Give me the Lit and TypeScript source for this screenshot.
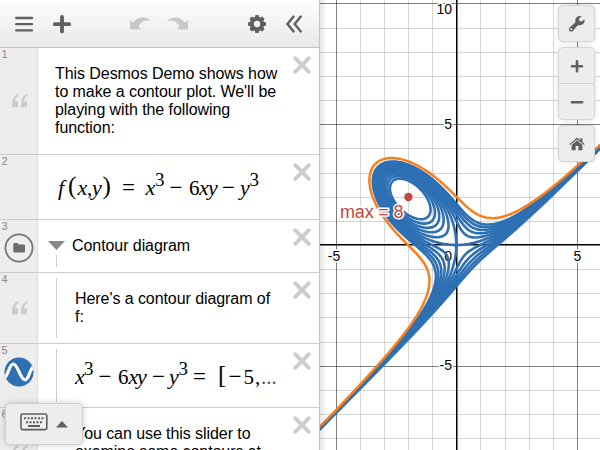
import { LitElement, html, svg, css } from "lit";
import { customElement } from "lit/decorators.js";

/* ---------- graph geometry ---------- */
const WIDTH = 280;
const HEIGHT = 450;
const UNIT = 24.15;
const OX = 136.3;
const OY = 244.97;
const LEVELS = Array.from({ length: 11 }, (_, i) => i - 5);

const f = (x: number, y: number) => x ** 3 - 6 * x * y - y ** 3;
const snap = (v: number) => Math.round(v) + 0.5;

/* Marching squares over the visible plane. */
function contour(level: number): string {
  const step = 2;
  const nx = WIDTH / step + 2;
  const ny = HEIGHT / step + 2;
  const at = (i: number, j: number) =>
    f(((i - 1) * step + 0.63 - OX) / UNIT, (OY - ((j - 1) * step + 0.37)) / UNIT) - level;
  const px = (i: number) => (i - 1) * step + 0.63;
  const py = (j: number) => (j - 1) * step + 0.37;
  let d = "";
  let row = Array.from({ length: nx + 1 }, (_, i) => at(i, 0));
  for (let j = 0; j < ny; j++) {
    const next = Array.from({ length: nx + 1 }, (_, i) => at(i, j + 1));
    for (let i = 0; i < nx; i++) {
      const a = row[i], b = row[i + 1], c = next[i + 1], e = next[i];
      const pts: string[] = [];
      const add = (x: number, y: number) => pts.push(`${x.toFixed(2)} ${y.toFixed(2)}`);
      if (a > 0 !== b > 0) add(px(i) + (step * a) / (a - b), py(j));
      if (b > 0 !== c > 0) add(px(i + 1), py(j) + (step * b) / (b - c));
      if (e > 0 !== c > 0) add(px(i) + (step * e) / (e - c), py(j + 1));
      if (a > 0 !== e > 0) add(px(i), py(j) + (step * a) / (a - e));
      for (let k = 0; k + 1 < pts.length; k += 2) d += `M${pts[k]}L${pts[k + 1]}`;
    }
    row = next;
  }
  return d;
}

@customElement("contour-graph")
export class ContourGraph extends LitElement {
  static styles = css`
    :host { display: block; width: 280px; height: 450px; background: #fff; }
    svg { display: block; }
    .minor { stroke: #000; stroke-opacity: 0.16; stroke-width: 1; }
    .major { stroke: #000; stroke-opacity: 0.5; stroke-width: 1; }
    .axis { stroke: #000; stroke-width: 1.5; }
    .curve { fill: none; stroke: #2d70b3; stroke-width: 2.6; stroke-linecap: round; }
    .slider { stroke: #fa7e19; stroke-width: 2.5; }
    .label { font: 14px "Liberation Sans", Arial, sans-serif; text-anchor: end; fill: #000;
      stroke: #fff; stroke-width: 3px; stroke-linejoin: round; paint-order: stroke; }
    .mid { text-anchor: middle; }
    .max { font: 18px "Liberation Sans", Arial, sans-serif; fill: #c74440;
      stroke: #fff; stroke-width: 3px; stroke-linejoin: round; paint-order: stroke; }
    .dot { fill: #c74440; }
  `;
  render() {
    const xs = Array.from({ length: 12 }, (_, i) => i - 6).filter((n) => n !== 0);
    const ys = Array.from({ length: 20 }, (_, i) => i - 9).filter((n) => n !== 0);
    return html`<svg width="280" height="450" viewBox="0 0 280 450">
      <defs>
        <linearGradient id="edge"><stop offset="0" stop-opacity=".1" /><stop offset="1" stop-opacity="0" /></linearGradient>
      </defs>
      ${xs.map((n) => svg`<line class=${n % 5 ? "minor" : "major"} x1=${snap(OX + n * UNIT)} x2=${snap(OX + n * UNIT)} y1="0" y2="450"></line>`)}
      ${ys.map((n) => svg`<line class=${n % 5 ? "minor" : "major"} y1=${snap(OY - n * UNIT)} y2=${snap(OY - n * UNIT)} x1="0" x2="280"></line>`)}
      <line class="axis" x1="136.75" x2="136.75" y1="0" y2="450" />
      <line class="axis" x1="0" x2="280" y1="244.75" y2="244.75" />
      <text class="label" x="132" y="14">10</text>
      <text class="label" x="132" y="129">5</text>
      <text class="label" x="132" y="370">-5</text>
      <text class="label" x="132" y="261">0</text>
      <text class="label mid" x="14" y="261">-5</text>
      <text class="label mid" x="257.5" y="261">5</text>
      ${LEVELS.map((k) => svg`<path class="curve" d=${contour(k)}></path>`)}
      <path class="curve slider" d=${contour(-8)} />
      <circle class="dot" cx="88.4" cy="197" r="4.2" />
      <text class="max" x="20" y="218" textLength="63.5">max = 8</text>
      <rect width="7" height="450" fill="url(#edge)" />
    </svg>`;
  }
}

/* ---------- formulas ---------- */
type Glyph = [string, number, string?];

const FORMULA_F: Glyph[] = [
  ["f", 20], ["(", 30, "big"], ["x", 39.5], [",", 49, "up"], ["y", 54], [")", 64.5, "big"],
  ["=", 84, "op"], ["x", 107.5], ["3", 117, "sup"], ["−", 131.5, "op"], ["6", 151, "up"],
  ["x", 161], ["y", 170], ["−", 184, "op"], ["y", 202], ["3", 211.5, "sup"],
];
const FORMULA_C: Glyph[] = [
  ["x", 37], ["3", 46, "sup"], ["−", 60.5, "op"], ["6", 80, "up"], ["x", 90.5], ["y", 99],
  ["−", 114, "op"], ["y", 131], ["3", 140.5, "sup"], ["=", 155, "op"], ["[", 180, "big"],
  ["−", 190.5, "op"], ["5", 205.5, "up"], [",", 217, "up"], ["...", 223, "fade"],
];

const formula = (glyphs: Glyph[], baseline: number, height: number) => html`
  <svg class="formula" width="242" height=${height}>
    ${glyphs.map(([t, x, kind = "it"]) => svg`<text class=${kind} x=${x} y=${
      kind === "sup" ? baseline - 8.6 : kind === "big" ? baseline - 1 : baseline}>${t}</text>`)}
  </svg>`;

/* ---------- expression list ---------- */
const closeIcon = html`<svg class="close" width="18" height="18" viewBox="0 0 18 18"><path d="M2.2 2.2L15.8 15.8M15.8 2.2L2.2 15.8" /></svg>`;
const quoteIcon = html`<svg class="quote" width="16" height="14" viewBox="0 0 16 14">
  <path d="M6.3 0C2.4 1.1 .2 4.6 .2 9.4V13.2H6V7.2H3.2C3.3 4.7 4.3 3.2 6.3 2.3ZM15.3 0C11.4 1.1 9.2 4.6 9.2 9.4V13.2H15V7.2H12.2C12.3 4.7 13.3 3.2 15.3 2.3Z" /></svg>`;
const folderIcon = html`<svg class="badge" width="30" height="30" viewBox="0 0 30 30">
  <circle cx="15" cy="15" r="13.6" fill="none" stroke="#777" stroke-width="1.8" />
  <path d="M9.3 11.2Q9.3 10 10.5 10H13.4Q14.2 10 14.5 11L14.7 11.4H19.8Q21 11.4 21 12.5V18.2Q21 19.4 19.8 19.4H10.5Q9.3 19.4 9.3 18.2Z" fill="#6d6d6d" /></svg>`;
const waveIcon = html`<svg class="badge wave" width="30" height="30" viewBox="0 0 30 30">
  <defs><clipPath id="disc"><circle cx="15" cy="15" r="14.5" /></clipPath></defs>
  <circle cx="15" cy="15" r="14.5" fill="#2d70b3" />
  <path clip-path="url(#disc)" d="M-1 23C4.5 19 5 7 9.3 7C14 7 16 22.8 21 22.8C25.5 22.8 24.5 13 30.5 8.5" fill="none" stroke="#fff" stroke-width="3.2" /></svg>`;

@customElement("expression-list")
export class ExpressionList extends LitElement {
  static styles = css`
    :host { display: block; flex: 1; min-height: 0; overflow: hidden; background: #fff; }
    .row { display: grid; grid-template-columns: 38px 1fr 26px; box-sizing: border-box; border-bottom: 1px solid #ccc; }
    .h1 { height: 107px; } .h2 { height: 65px; } .h3 { height: 53px; }
    .h4 { height: 71px; } .h5 { height: 64px; } .h6 { height: 90px; }
    .gutter { background: #ededed; border-right: 1px solid #ddd; display: grid; grid-template-rows: 12px 1fr; color: #888; }
    .num { font-size: 11px; line-height: 12px; padding-left: 1.5px; }
    .icon { display: flex; align-items: center; justify-content: flex-start; margin-top: -12px; }
    .quote { margin: -1px 0 0 11.6px; fill: #ccc; }
    .badge { margin: 3px 0 0 3.5px; }
    .wave { margin-top: -8px; }
    .body { display: flex; min-width: 0; color: #000; }
    .text { font-size: 16px; line-height: 18px; letter-spacing: -0.07px; padding: 17px 0 0 17px; white-space: pre; }
    .deep { padding-left: 18px; }
    .last { padding-left: 37px; }
    .rail { flex: none; width: 1px; background: #ccc; margin: 5px 0 5px 18px; }
    .head { flex-direction: column; }
    .title { display: flex; gap: 7px; align-items: center; height: 18px; margin: 17px 0 0 10px; font-size: 16px;
      letter-spacing: -0.07px; }
    .stub { width: 1px; height: 12px; background: #ccc; margin-left: 18px; }
    .tri { width: 17px; height: 9px; margin-top: -2px; fill: #888; }
    .close { margin-top: 8px; fill: none; stroke: #ccc; stroke-width: 3.9; stroke-linecap: round; }
    .formula { display: block; flex: none; overflow: visible; }
    .pull { margin-left: -19px; }
    .formula text { font-family: "Liberation Serif", "Times New Roman", serif; font-size: 21px; fill: #000; }
    .formula .it { font-style: italic; font-size: 22px; }
    .formula .sup { font-size: 19px; }
    .formula .op { font-size: 23px; }
    .formula .big { font-size: 25px; }
    .formula .fade { fill: #555; }
  `;
  render() {
    return html`
      <div class="row h1">
        <div class="gutter"><div class="num">1</div><div class="icon">${quoteIcon}</div></div>
        <div class="body"><div class="text">This Desmos Demo shows how
to make a contour plot. We'll be
playing with the following
function:</div></div>${closeIcon}
      </div>
      <div class="row h2">
        <div class="gutter"><div class="num">2</div></div>
        <div class="body">${formula(FORMULA_F, 40, 60)}</div>${closeIcon}
      </div>
      <div class="row h3">
        <div class="gutter"><div class="num">3</div><div class="icon">${folderIcon}</div></div>
        <div class="body head">
          <div class="title"><svg class="tri" viewBox="0 0 17 9"><path d="M0 0H17L8.5 9Z" /></svg>Contour diagram</div>
          <div class="stub"></div>
        </div>${closeIcon}
      </div>
      <div class="row h4">
        <div class="gutter"><div class="num">4</div><div class="icon">${quoteIcon}</div></div>
        <div class="body"><div class="rail"></div><div class="text deep">Here's a contour diagram of
f:</div></div>${closeIcon}
      </div>
      <div class="row h5">
        <div class="gutter"><div class="num">5</div><div class="icon">${waveIcon}</div></div>
        <div class="body"><div class="rail"></div><div class="pull">${formula(FORMULA_C, 40, 60)}</div></div>${closeIcon}
      </div>
      <div class="row h6">
        <div class="gutter"><div class="num">6</div><div class="icon">${quoteIcon}</div></div>
        <div class="body"><div class="text last">You can use this slider to
examine some contours at</div></div>${closeIcon}
      </div>`;
  }
}

/* ---------- shell ---------- */
const teeth = Array.from({ length: 8 }, (_, i) => i * 45);

@customElement("app-root")
export class AppRoot extends LitElement {
  static styles = css`
    :host { display: flex; position: relative; width: 600px; height: 450px; overflow: hidden;
      font-family: "Liberation Sans", Arial, sans-serif; background: #fff; }
    .panel { display: flex; flex-direction: column; width: 319px; height: 450px; border-right: 1px solid #c4c4c4; }
    .bar { display: flex; align-items: center; box-sizing: border-box; height: 48px; padding: 0 16px 0 13.5px;
      background: linear-gradient(#fdfdfd, #e9e9e9); border-bottom: 1px solid #c4c4c4; }
    .plus { margin-left: 18px; }
    .undo { margin-left: 57.5px; }
    .redo { margin-left: 16px; }
    .gear { margin-left: 58px; }
    .fold { margin-left: 18px; }
    .tools { position: absolute; left: 558px; top: 5px; display: flex; flex-direction: column; gap: 5px; }
    .box { display: flex; flex-direction: column; box-sizing: border-box; width: 37px; border: 1px solid #d4d4d4;
      border-radius: 5px; background: #ededed; box-shadow: 0 0 5px rgba(0, 0, 0, 0.12); }
    .btn { display: flex; align-items: center; justify-content: center; height: 35px; }
    .btn + .btn { border-top: 1px solid #d4d4d4; }
    .keypad { position: absolute; left: 5px; top: 403px; display: flex; align-items: center; gap: 8px; box-sizing: border-box;
      width: 78px; height: 42px; padding: 0 0 4px 14px; border: 1px solid #d0d0d0; border-radius: 5px; background: #ededed;
      box-shadow: 0 0 6px rgba(0, 0, 0, 0.2); }
    .caret { margin-top: 4px; }
  `;
  render() {
    return html`
      <div class="panel">
        <div class="bar">
          <svg width="20" height="20" viewBox="0 0 20 20"><path d="M2.2 4H18M2.2 10.2H18M2.2 16.4H18" stroke="#5f5f5f" stroke-width="2.3" stroke-linecap="round" /></svg>
          <svg class="plus" width="20" height="20" viewBox="0 0 20 20"><path d="M10 3V17.4M2.8 10.2H17.2" stroke="#5f5f5f" stroke-width="3.8" stroke-linecap="round" /></svg>
          <svg class="undo" width="22" height="20" viewBox="0 0 22 20"><path d="M1 6L4 8.5C9 2.5 17 2 22 7.2C17 5.6 12.8 7 9.5 12L11.8 15.2L1 15.4Z" fill="#c8c8c8" /></svg>
          <svg class="redo" width="22" height="20" viewBox="0 0 22 20"><path d="M21 6L18 8.5C13 2.5 5 2 0 7.2C5 5.6 9.2 7 12.5 12L10.2 15.2L21 15.4Z" fill="#c8c8c8" /></svg>
          <svg class="gear" width="20" height="20" viewBox="-10 -10 20 20">
            <circle r="5.2" fill="none" stroke="#5f5f5f" stroke-width="4" />
            ${teeth.map((a) => svg`<path transform="rotate(${a})" d="M-2.3 -6L-1.8 -8.5Q-1.7 -9 -1.2 -9H1.2Q1.7 -9 1.8 -8.5L2.3 -6Z" fill="#5f5f5f"></path>`)}
          </svg>
          <svg class="fold" width="18" height="20" viewBox="0 0 18 20"><path d="M8.6 2.6L2.4 10L8.6 17.4M15.8 2.6L9.6 10L15.8 17.4" fill="none" stroke="#5f5f5f" stroke-width="2.4" stroke-linecap="round" stroke-linejoin="round" /></svg>
        </div>
        <expression-list></expression-list>
      </div>
      <contour-graph></contour-graph>
      <div class="tools">
        <div class="box"><div class="btn"><svg width="18" height="18" viewBox="0 0 18 18">
          <path d="M16.4 4.3L13.6 6.6L11.5 6.1L10.9 4L13.5 1.3C11 .5 8.4 1.6 7.5 4C7.1 5.2 7.2 6.2 7.5 7.2L1.7 12.4C.6 13.5 .6 15 1.6 16C2.6 17 4.1 16.9 5.1 15.8L10 10C12.5 10.8 15 10 16.1 7.8C16.7 6.6 16.7 5.4 16.4 4.3ZM3.3 15.3A1 1 0 1 1 3.3 13.3A1 1 0 0 1 3.3 15.3Z" fill="#5f5f5f" /></svg></div></div>
        <div class="box">
          <div class="btn"><svg width="14" height="14" viewBox="0 0 14 14"><path d="M7 2.2V12.2M2 7.2H12" stroke="#5f5f5f" stroke-width="2.6" stroke-linecap="round" /></svg></div>
          <div class="btn"><svg width="14" height="14" viewBox="0 0 14 14"><path d="M2 7.2H12" stroke="#5f5f5f" stroke-width="2.6" stroke-linecap="round" /></svg></div>
        </div>
        <div class="box"><div class="btn"><svg width="16" height="14" viewBox="0 0 16 14">
          <path d="M8 .4L.3 7.2L1.1 8.1L8 2.2L14.9 8.1L15.7 7.2L13.4 5.1V1.2H11.3V3.3ZM8 3.3L2.6 7.9V13.2H6.6V9H9.4V13.2H13.4V7.9Z" fill="#5f5f5f" /></svg></div></div>
      </div>
      <div class="keypad">
        <svg width="28" height="18" viewBox="0 0 28 18">
          <rect x="1" y="1" width="25.8" height="15.6" rx="1.6" fill="none" stroke="#5f5f5f" stroke-width="1.6" />
          <path d="M4 5.2H24" stroke="#5f5f5f" stroke-width="2" stroke-dasharray="2 1.5" />
          <path d="M6 9.2H22.5" stroke="#5f5f5f" stroke-width="2" stroke-dasharray="2 1.5" />
          <path d="M8 13H20" stroke="#5f5f5f" stroke-width="2" />
        </svg>
        <svg class="caret" width="12" height="7" viewBox="0 0 12 7"><path d="M6 0L12 6.6H0Z" fill="#5f5f5f" /></svg>
      </div>`;
  }
}
